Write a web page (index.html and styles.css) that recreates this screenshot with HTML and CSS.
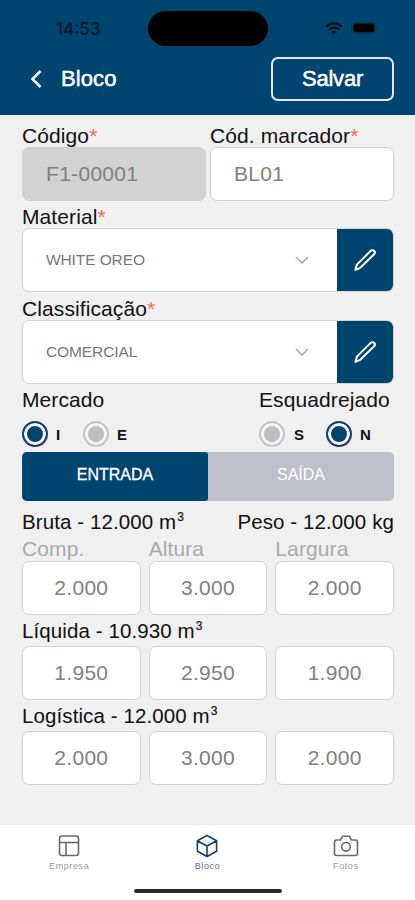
FILE: index.html
```html
<!DOCTYPE html>
<html lang="pt-BR">
<head>
    <meta charset="UTF-8">
    <meta name="viewport" content="width=device-width, initial-scale=1.0">
    <title>Bloco</title>
    <link rel="stylesheet" href="styles.css">
</head>
<body>
    <header class="header">
        <div class="status-bar">
            <span class="clock">14:53</span>
            <div class="island"></div>
            <div class="status-icons">
                <span class="signal"><i></i><i></i><i></i><i></i></span>
                <svg class="wifi" viewBox="0 0 18 13" width="18" height="13">
                    <path d="M1.2 4.6a11.2 11.2 0 0 1 15.6 0M4 7.6a7.2 7.2 0 0 1 10 0" fill="none" stroke="#02101c" stroke-width="2.2"/>
                    <path d="M9 12.8L6.2 10a4 4 0 0 1 5.6 0z" fill="#02101c"/>
                </svg>
                <svg class="battery" viewBox="0 0 28 14" width="28" height="14">
                    <rect x="0.5" y="0.5" width="24.5" height="12.5" rx="4" fill="none" stroke="#033756"/>
                    <rect x="2.4" y="2.4" width="21" height="8.8" rx="2" fill="#000"/>
                    <path d="M26.3 5v4" stroke="#033756" stroke-width="1.4"/>
                </svg>
            </div>
        </div>
        <div class="title-bar">
            <svg class="back" viewBox="0 0 12 20" width="12" height="20">
                <path d="M10.5 2l-8 8 8 8" fill="none" stroke="#fff" stroke-width="2.5"/>
            </svg>
            <h1 class="title">Bloco</h1>
            <button class="save">Salvar</button>
        </div>
    </header>

    <main class="form">
        <div class="row two">
            <div>
                <div class="label">Código<b>*</b></div>
                <div class="input disabled">F1-00001</div>
            </div>
            <div>
                <div class="label">Cód. marcador<b>*</b></div>
                <div class="input">BL01</div>
            </div>
        </div>

        <div class="label select-label">Material<b>*</b></div>
        <div class="select">
            <span class="value">WHITE OREO</span>
            <svg class="arrow" viewBox="0 0 14 8" width="14" height="8"><path d="M1 1l6 6 6-6" fill="none" stroke="#a5a5a5" stroke-width="1.5"/></svg>
            <button class="edit">
                <svg viewBox="0 0 24 24" width="24" height="24"><path d="M17.6 2.9a2.4 2.4 0 0 1 3.5 3.3L7.2 19.8 2.4 21.8l1.5-5.2z" fill="none" stroke="#fff" stroke-width="2" stroke-linejoin="round"/></svg>
            </button>
        </div>

        <div class="label select-label">Classificação<b>*</b></div>
        <div class="select">
            <span class="value">COMERCIAL</span>
            <svg class="arrow" viewBox="0 0 14 8" width="14" height="8"><path d="M1 1l6 6 6-6" fill="none" stroke="#a5a5a5" stroke-width="1.5"/></svg>
            <button class="edit">
                <svg viewBox="0 0 24 24" width="24" height="24"><path d="M17.6 2.9a2.4 2.4 0 0 1 3.5 3.3L7.2 19.8 2.4 21.8l1.5-5.2z" fill="none" stroke="#fff" stroke-width="2" stroke-linejoin="round"/></svg>
            </button>
        </div>

        <div class="choices">
            <div>
                <div class="label choice-label">Mercado</div>
                <div class="radios">
                    <span class="radio on"></span><span class="option">I</span>
                    <span class="radio"></span><span class="option">E</span>
                </div>
            </div>
            <div class="choice-right">
                <div class="label choice-label">Esquadrejado</div>
                <div class="radios">
                    <span class="radio"></span><span class="option wide">S</span>
                    <span class="radio on"></span><span class="option">N</span>
                </div>
            </div>
        </div>

        <div class="tabs">
            <button class="tab active">ENTRADA</button>
            <button class="tab">SAÍDA</button>
        </div>

        <div class="totals">
            <span class="measure">Bruta - 12.000 m<sup>3</sup></span>
            <span class="measure">Peso - 12.000 kg</span>
        </div>
        <div class="row three dims">
            <span>Comp.</span><span>Altura</span><span>Largura</span>
        </div>
        <div class="row three">
            <div class="input number">2.000</div>
            <div class="input number">3.000</div>
            <div class="input number">2.000</div>
        </div>

        <div class="measure group">Líquida - 10.930 m<sup>3</sup></div>
        <div class="row three">
            <div class="input number">1.950</div>
            <div class="input number">2.950</div>
            <div class="input number">1.900</div>
        </div>

        <div class="measure group">Logística - 12.000 m<sup>3</sup></div>
        <div class="row three">
            <div class="input number">2.000</div>
            <div class="input number">3.000</div>
            <div class="input number">2.000</div>
        </div>
    </main>

    <footer class="footer">
        <nav class="nav">
            <div class="nav-item">
                <svg viewBox="0 0 24 24" width="24" height="24"><rect x="2.5" y="2" width="19" height="19.5" rx="2.5"/><path d="M2.5 8.5h19M9 8.5v13"/></svg>
                <span>Empresa</span>
            </div>
            <div class="nav-item current">
                <svg viewBox="0 0 24 24" width="24" height="24"><path d="M12 1.5l9.6 5.2v10.6L12 22.5l-9.6-5.2V6.7zM2.4 6.7L12 12l9.6-5.3M12 12v10.5"/></svg>
                <span>Bloco</span>
            </div>
            <div class="nav-item">
                <svg viewBox="0 0 26 24" width="26" height="24"><path d="M3.5 6h4l2.2-3.8h6.6L18.5 6h4a2 2 0 0 1 2 2v11.500a2 2 0 0 1-2 2h-19a2 2 0 0 1-2-2V8a2 2 0 0 1 2-2z"/><circle cx="13" cy="12.8" r="4.3"/></svg>
                <span>Fotos</span>
            </div>
        </nav>
        <div class="home-bar"></div>
    </footer>
</body>
</html>
```

FILE: styles.css
```css
* {
    box-sizing: border-box;
}

body {
    margin: 0;
    height: 900px;
    display: flex;
    flex-direction: column;
    background-color: #f0f0f0;
    color: #111;
    font-family: "Liberation Sans", Arial, sans-serif;
}

button {
    font-family: inherit;
    border: none;
    padding: 0;
}

svg {
    display: block;
}

/* header */
.header {
    height: 115px;
    background-color: #00456f;
    border-bottom: 1px solid #123f70;
}

.status-bar {
    height: 57px;
    padding: 11px 36px 0 56px;
    display: flex;
    align-items: flex-start;
}

.clock {
    width: 92px;
    padding-top: 8px;
    font-family: Inter, sans-serif;
    font-size: 17px;
    line-height: 20px;
    font-weight: 500;
    color: #02182a;
}

.island {
    width: 120px;
    height: 35px;
    border-radius: 18px;
    background-color: #000;
}

.status-icons {
    flex: 1;
    padding-top: 10px;
    display: flex;
    justify-content: flex-end;
    align-items: center;
}

.signal {
    display: flex;
    gap: 3px;
    margin: 8px 9px 0 0;
}

.signal i {
    width: 2px;
    height: 2px;
    border-radius: 50%;
    background-color: #053553;
}

.wifi {
    margin-right: 8px;
}

.title-bar {
    height: 44px;
    padding: 0 21px 0 30px;
    display: flex;
    align-items: center;
}

.title {
    margin: 0 auto 0 19px;
    font-size: 22px;
    font-weight: 400;
    letter-spacing: 0.1px;
    color: #fff;
    -webkit-text-stroke: 0.5px #fff;
}

.save {
    width: 123px;
    height: 44px;
    border: 2px solid #e6e8f5;
    border-radius: 7px;
    background: none;
    color: #fff;
    font-size: 22px;
    letter-spacing: -0.2px;
    -webkit-text-stroke: 0.5px #fff;
}

/* form */
.form {
    flex: 1;
    padding: 8px 21px 0 22px;
}

.row {
    display: grid;
}

.two {
    grid-template-columns: 1fr 1fr;
    gap: 4px;
}

.three {
    grid-template-columns: 1fr 1fr 1fr;
    gap: 8px;
}

.label {
    height: 24px;
    line-height: 26px;
    font-size: 21px;
    letter-spacing: 0.1px;
    white-space: nowrap;
}

.label b {
    font-weight: 400;
    color: #ff6258;
}

.select-label {
    height: 27px;
    line-height: 31px;
}

.select + .select-label {
    height: 28px;
    line-height: 33px;
}

.input {
    height: 54px;
    padding-left: 23px;
    border: 1px solid #d2d2d5;
    border-radius: 7px;
    background-color: #fff;
    color: #808080;
    font-size: 21px;
    line-height: 52px;
    letter-spacing: 0.3px;
}

.disabled {
    background-color: #d2d2d2;
}

.number {
    padding: 0;
    text-align: center;
}

.select {
    height: 64px;
    padding-left: 23px;
    border: 1px solid #d2d2d5;
    border-radius: 7px;
    background-color: #fff;
    display: flex;
    align-items: center;
    overflow: hidden;
}

.value {
    flex: 1;
    font-size: 15.5px;
    letter-spacing: -0.1px;
    color: #777;
}

.arrow {
    margin-right: 28px;
}

.edit {
    width: 56px;
    height: 64px;
    display: flex;
    align-items: center;
    justify-content: center;
    background-color: #00456f;
}

.choices {
    height: 68px;
    display: flex;
    justify-content: space-between;
}

.choice-right {
    width: 135px;
}

.choice-label {
    height: 37px;
    line-height: 32px;
}

.radios {
    display: flex;
    align-items: center;
}

.radio {
    width: 26px;
    height: 26px;
    border: 2px solid #c5c5ca;
    border-radius: 50%;
    background-color: #bdbdc5;
    box-shadow: inset 0 0 0 3px #f5f5f7;
}

.radio.on {
    border-color: #173b72;
    background-color: #00456f;
    box-shadow: inset 0 0 0 3px #fff;
}

.option {
    width: 35px;
    padding-left: 8px;
    font-size: 15px;
    font-weight: 700;
}

.wide {
    width: 41px;
    padding-left: 9px;
}

.tabs {
    height: 49px;
    display: flex;
    border-radius: 5px;
    overflow: hidden;
    background-color: #bfbfc9;
}

.tab {
    flex: 1;
    padding-bottom: 4px;
    background: none;
    color: #fff;
    font-size: 16px;
}

.tab.active {
    border-radius: 0 3px 3px 0;
    background-color: #00456f;
    -webkit-text-stroke: 0.3px #fff;
}

.totals {
    height: 33px;
    display: flex;
    justify-content: space-between;
    line-height: 42px;
}

.measure {
    font-size: 20.5px;
    letter-spacing: 0.1px;
    white-space: nowrap;
}

.measure sup {
    margin-left: 1px;
    font-size: 12px;
    line-height: 0;
    vertical-align: 8px;
    -webkit-text-stroke: 0.2px #111;
}

.dims {
    height: 27px;
    color: #aaa;
    font-size: 21px;
    line-height: 30px;
    letter-spacing: 0.1px;
}

.group {
    height: 31px;
    line-height: 32px;
}

/* footer */
.footer {
    height: 75px;
    background-color: #fff;
}

.nav {
    height: 64px;
    padding-top: 9px;
    display: flex;
}

.nav-item {
    flex: 1;
    display: flex;
    flex-direction: column;
    align-items: center;
    color: #999;
    font-size: 9px;
    letter-spacing: 0.6px;
    line-height: 16px;
}

.nav-item svg {
    fill: none;
    stroke: #686868;
    stroke-width: 1.6;
    stroke-linejoin: round;
}

.current {
    color: #56708f;
}

.current svg {
    stroke: #123f70;
}

.home-bar {
    width: 148px;
    height: 4px;
    margin: 0 auto;
    border-radius: 2px;
    background-color: #2b2929;
}
```
